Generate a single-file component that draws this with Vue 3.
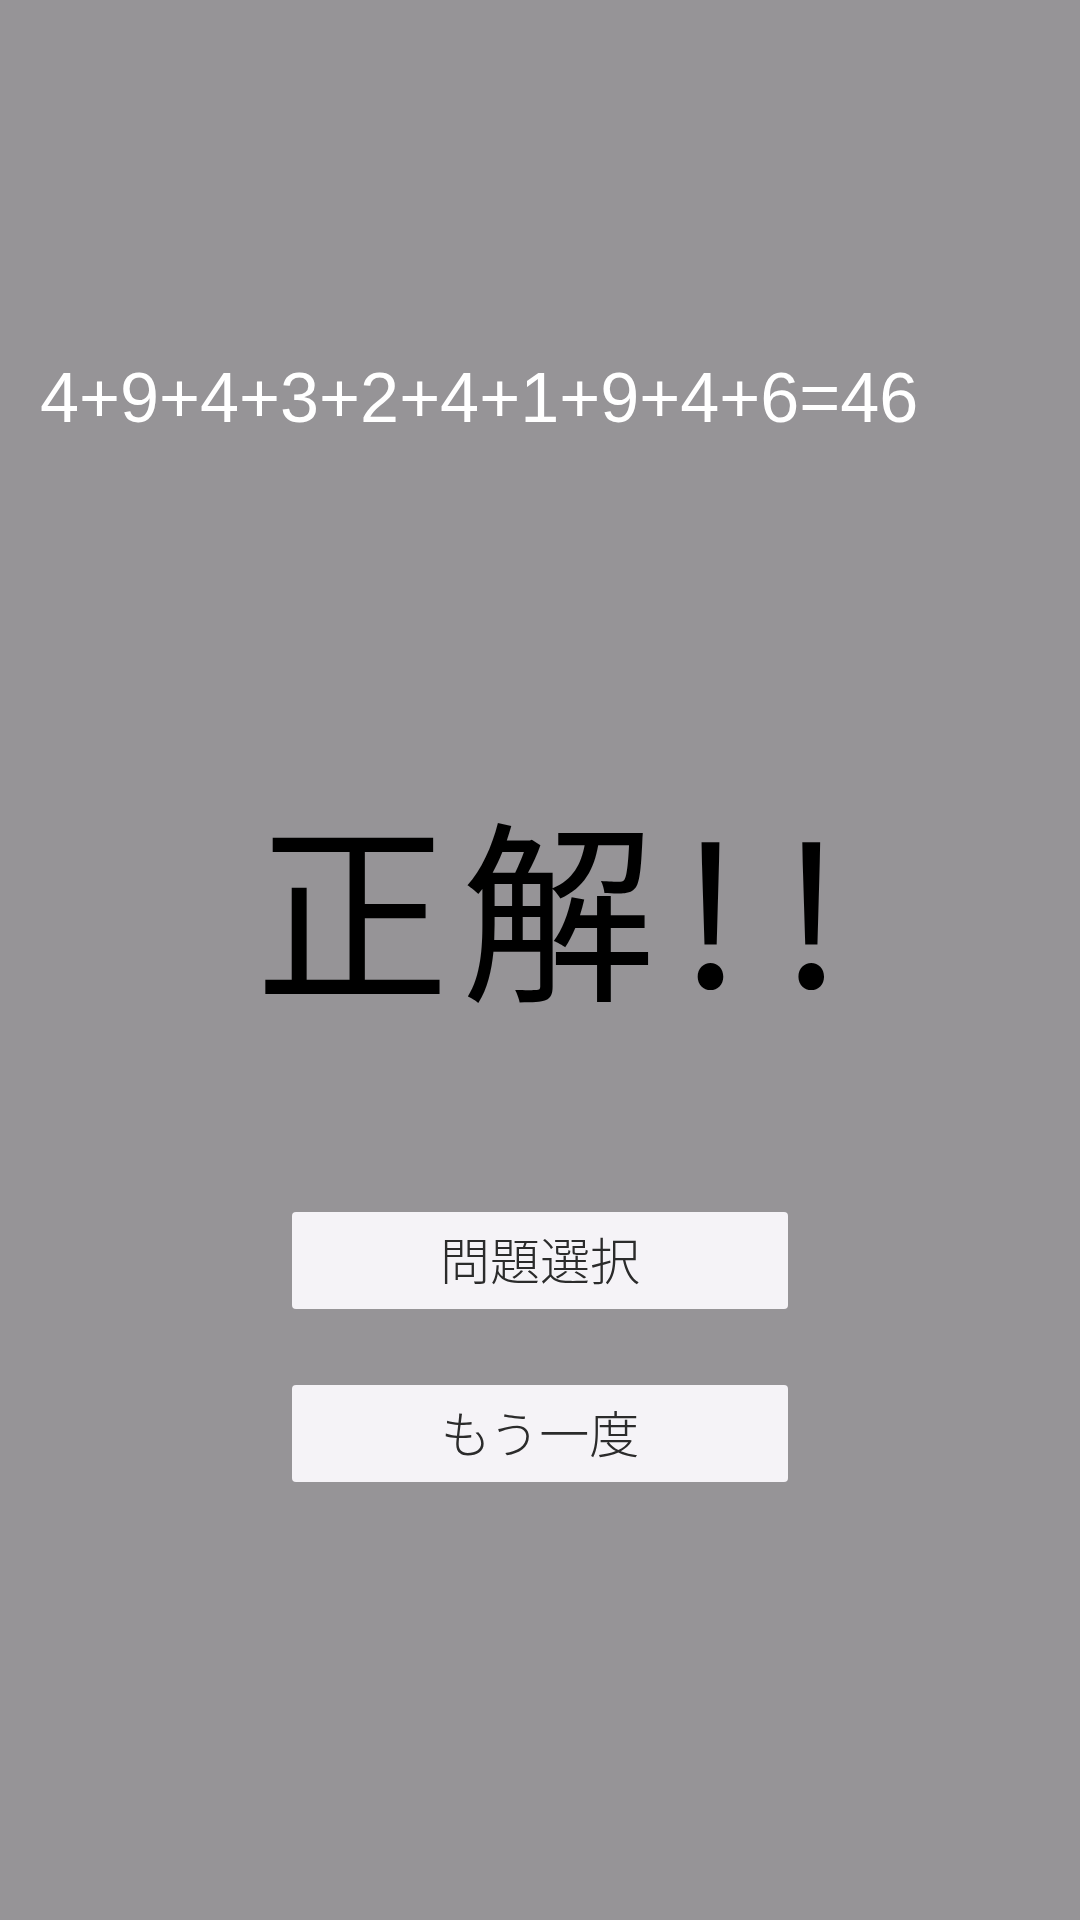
<script setup>
const sum = '4+9+4+3+2+4+1+9+4+6=46'
const buttons = ['問題選択', 'もう一度']
</script>

<template>
  <main class="result">
    <p class="sum">{{ sum }}</p>

    <h1 class="title">
      <span class="kanji">正解</span><span class="marks">!!</span>
    </h1>

    <div class="actions">
      <button v-for="b in buttons" :key="b" type="button">{{ b }}</button>
    </div>
  </main>
</template>

<style scoped>
.result {
  height: 1920px;
  box-sizing: border-box;
  padding-top: 358px;
  background: #969497;
  display: flex;
  flex-direction: column;
  overflow: hidden;
}

.sum {
  margin: 0;
  padding-left: 40px;
  font-family: "Liberation Sans", sans-serif;
  font-size: 70.2px;
  line-height: 80px;
  color: #fff;
}

.title {
  margin: 355px 0 0;
  height: 232px;
  display: flex;
  justify-content: center;
  font-family: "Noto Sans CJK JP", sans-serif;
  font-size: 194px;
  font-weight: 400;
  line-height: 220px;
  color: #000;
}

.kanji {
  letter-spacing: 12px;
}

.marks {
  margin-left: 12px;
  letter-spacing: 38px;
  margin-right: -56px;
}

.actions {
  margin-top: 187px;
  display: flex;
  flex-direction: column;
  align-items: center;
  gap: 76px;
}

button {
  width: 496px;
  height: 97px;
  padding: 0 0 6px;
  border: none;
  border-radius: 4px;
  background: #f5f3f7;
  font-family: "Noto Sans CJK JP", sans-serif;
  font-size: 50px;
  font-weight: 300;
  color: #2b2b2b;
}
</style>

<style>
html,
body {
  background: #969497;
}
</style>
